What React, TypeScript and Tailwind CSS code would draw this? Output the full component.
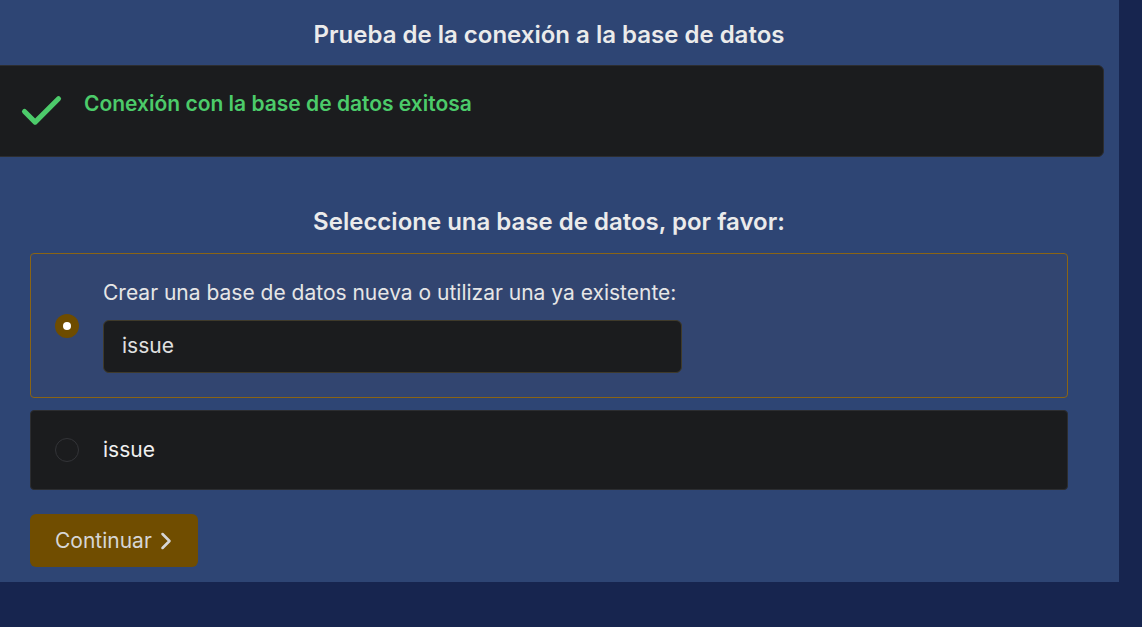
import { Check, ChevronRight } from "lucide-react";

export default function App() {
    return (
        <div className="min-h-[627px] w-full bg-[#17254f] font-['Inter',sans-serif] text-[#e6e6e6]">
            <div className="w-[1119px] bg-[#2e4574] pb-[15px] overflow-hidden">
                <div className="ml-[-6px] w-[1110px]">
                    <h2 className="pt-[20px] text-center text-[24px] font-semibold leading-[30px] text-[#ebebeb]">
                        Prueba de la conexión a la base de datos
                    </h2>
                    <div className="mt-[15px] h-[92px] rounded-md border border-[#2c2d30] bg-[#1b1c1e] pl-[21px] pt-[24px]">
                        <div className="flex h-[28px] items-center gap-[17px]">
                            <Check className="mt-[14px] h-[51px] w-[51px] shrink-0 text-[#4ccb6a]" strokeWidth={2.4} />
                            <span className="text-[21px] font-semibold text-[#4ccb6a]">Conexión con la base de datos exitosa</span>
                        </div>
                    </div>

                    <div className="px-[36px]">
                        <h3 className="mt-[50px] text-center text-[24px] font-semibold leading-[30px] text-[#ebebeb]">
                            Seleccione una base de datos, por favor:
                        </h3>

                        <div className="mt-[16px] flex h-[145px] items-center rounded-[4px] border border-[#8a6414] bg-[#324570] px-[24px]">
                            <div className="flex h-[24px] w-[24px] items-center justify-center rounded-full bg-[#6e4c00]">
                                <div className="h-[8px] w-[8px] rounded-full bg-white" />
                            </div>
                            <div className="ml-[24px]">
                                <p className="text-[21px] leading-[28px] text-[#e6e6e6]">
                                    Crear una base de datos nueva o utilizar una ya existente:
                                </p>
                                <div className="mt-[13px] flex h-[53px] w-[579px] items-center rounded-md border border-[#3f3a2a] bg-[#1b1c1e] px-[18px] text-[21px] text-[#e0e0e0]">
                                    issue
                                </div>
                            </div>
                        </div>

                        <div className="mt-[12px] flex h-[80px] items-center rounded-[4px] border border-[#2c2d30] bg-[#1b1c1e] px-[24px]">
                            <div className="h-[24px] w-[24px] rounded-full border border-[#333438]" />
                            <span className="ml-[24px] text-[21px] text-[#f0f0f0]">issue</span>
                        </div>

                        <button className="mt-[24px] flex h-[53px] items-center rounded-md bg-[#704d00] pl-[25px] pr-[18px] text-[21px] text-[#d6d6d6]">
                            Continuar
                            <ChevronRight className="h-[28px] w-[28px]" strokeWidth={2.2} />
                        </button>
                    </div>
                </div>
            </div>
        </div>
    );
}
